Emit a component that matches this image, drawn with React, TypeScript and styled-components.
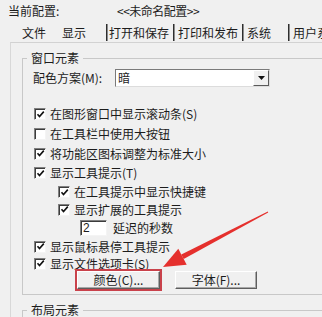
import React from 'react';
import styled, { createGlobalStyle } from 'styled-components';

const Global = createGlobalStyle`
  html, body { margin: 0; padding: 0; background: #f0f0f0; }
  body { font-family: "Noto Sans CJK SC", "Noto Sans", sans-serif; }
`;

const Window = styled.div`
  position: relative;
  width: 322px;
  height: 317px;
  overflow: hidden;
  background: #f0f0f0;
  color: #1c1c1c;
  font-family: "Noto Sans CJK SC", "Noto Sans", sans-serif;
  font-size: 12px;
  line-height: 14px;
`;

const Header = styled.div`
  display: flex;
  align-items: center;
  height: 22px;
  padding-left: 8px;
  white-space: nowrap;
`;

const HeaderLabel = styled.span`
  width: 109px;
  flex-shrink: 0;
`;

const HeaderValue = styled.span`
  letter-spacing: -0.5px;
`;

const TabBar = styled.div`
  display: flex;
  height: 20px;
  padding-left: 18px;
  white-space: nowrap;
`;

const Tab = styled.div<{ $w?: number; $sep?: boolean; $pad: number }>`
  flex-shrink: 0;
  box-sizing: border-box;
  width: ${p => (p.$w ? `${p.$w}px` : 'auto')};
  margin: 2px 0 1px;
  padding-left: ${p => p.$pad}px;
  display: flex;
  align-items: center;
  border-left: ${p => (p.$sep ? '1px solid #2e2e2e' : 'none')};
  box-shadow: ${p => (p.$sep ? 'inset 1px 0 0 #8c8c8c' : 'none')};
`;

const Panel = styled.div`
  margin-left: 10px;
  border-top: 1px solid #d2d2d2;
  border-left: 1px solid #d8d8d8;
  padding: 8px 0 0 11px;
`;

const Group = styled.fieldset<{ $gap?: number }>`
  margin: ${p => p.$gap ?? 0}px 0 0 0;
  padding: 0;
  min-width: 0;
  border: 1px solid #c8c8c8;
  border-right: none;
`;

const GroupTitle = styled.legend`
  padding: 0 4px;
  margin-left: 4px;
  line-height: 14px;
`;

const GroupBody = styled.div`
  display: flex;
  flex-direction: column;
  padding: 3px 0 5px 10px;
`;

const SchemeRow = styled.div`
  display: flex;
  align-items: center;
  height: 20px;
`;

const SchemeLabel = styled.span`
  width: 82px;
  flex-shrink: 0;
`;

const Select = styled.div`
  display: flex;
  align-items: center;
  box-sizing: border-box;
  width: 155px;
  height: 18px;
  background: #fff;
  border: 1px solid;
  border-color: #7a7a7a #dcdcdc #dcdcdc #7a7a7a;
  padding-left: 2px;
`;

const SelectArrow = styled.span`
  margin-left: auto;
  box-sizing: border-box;
  width: 16px;
  height: 16px;
  display: flex;
  align-items: center;
  justify-content: center;
  background: #f0f0f0;
  border: 1px solid;
  border-color: #ffffff #5a5a5a #5a5a5a #ffffff;
`;

const Rows = styled.div`
  display: flex;
  flex-direction: column;
  margin-top: 16px;
`;

const Row = styled.div<{ $h: number; $indent: number }>`
  display: flex;
  align-items: center;
  height: ${p => p.$h}px;
  padding-left: ${p => p.$indent}px;
  white-space: nowrap;
`;

const Check = styled.span`
  flex-shrink: 0;
  box-sizing: border-box;
  width: 12px;
  height: 12px;
  margin-right: 4px;
  background: #fff;
  border: 1px solid;
  border-color: #808080 #f4f4f4 #f4f4f4 #808080;
  box-shadow: inset 1px 1px 0 #3c3c3c;
  display: flex;
  align-items: center;
  justify-content: center;
`;

const Spin = styled.span`
  box-sizing: border-box;
  width: 27px;
  height: 16px;
  margin-right: 6px;
  background: #fff;
  border: 1px solid;
  border-color: #808080 #f4f4f4 #f4f4f4 #808080;
  box-shadow: inset 1px 1px 0 #3c3c3c;
  padding-left: 2px;
  font-family: "Liberation Sans", sans-serif;
  font-size: 12px;
  line-height: 14px;
`;

const ButtonRow = styled.div`
  display: flex;
  gap: 15px;
  padding-left: 44px;
`;

const Button = styled.button<{ $hl?: boolean }>`
  box-sizing: border-box;
  width: ${p => (p.$hl ? 83 : 82)}px;
  height: 18px;
  padding: 0;
  background: #f0f0f0;
  color: inherit;
  font: inherit;
  border: 1px solid;
  border-color: #ffffff #5e5e5e #5e5e5e #ffffff;
  box-shadow: inset -1px -1px 0 #a8a8a8;
  outline: ${p => (p.$hl ? '2px solid #c9424b' : 'none')};
  outline-offset: 0;
`;

const Overlay = styled.svg`
  position: absolute;
  left: 0;
  top: 0;
  pointer-events: none;
`;

const CheckMark = () => (
  <svg width="9" height="9" viewBox="0 0 9 9">
    <path d="M1.5 4.2 L3.5 6.5 L7.8 1.6" fill="none" stroke="#111" strokeWidth="1.6" />
  </svg>
);

type Item = { label: string; checked?: boolean; indent: number; h: number; spin?: string };

const items: Item[] = [
  { label: '在图形窗口中显示滚动条(S)', checked: true, indent: 1, h: 20 },
  { label: '在工具栏中使用大按钮', checked: false, indent: 1, h: 20 },
  { label: '将功能区图标调整为标准大小', checked: true, indent: 1, h: 19 },
  { label: '显示工具提示(T)', checked: true, indent: 1, h: 20 },
  { label: '在工具提示中显示快捷键', checked: true, indent: 25, h: 18 },
  { label: '显示扩展的工具提示', checked: true, indent: 25, h: 17 },
  { label: '延迟的秒数', indent: 47, h: 19, spin: '2' },
  { label: '显示鼠标悬停工具提示', checked: true, indent: 1, h: 19 },
  { label: '显示文件选项卡(S)', checked: true, indent: 1, h: 15 },
];

export default function App() {
  return (
    <>
      <Global />
      <Window>
        <Header>
          <HeaderLabel>当前配置:</HeaderLabel>
          <HeaderValue>&lt;&lt;未命名配置&gt;&gt;</HeaderValue>
        </Header>
        <TabBar>
          <Tab $w={40} $pad={4}>文件</Tab>
          <Tab $w={48} $pad={4}>显示</Tab>
          <Tab $w={67} $pad={2} $sep>打开和保存</Tab>
          <Tab $w={69} $pad={4} $sep>打印和发布</Tab>
          <Tab $w={46} $pad={4} $sep>系统</Tab>
          <Tab $pad={4} $sep>用户系统配置</Tab>
        </TabBar>
        <Panel>
          <Group>
            <GroupTitle>窗口元素</GroupTitle>
            <GroupBody>
              <SchemeRow>
                <SchemeLabel>配色方案(M):</SchemeLabel>
                <Select>
                  暗
                  <SelectArrow>
                    <svg width="7" height="4" viewBox="0 0 7 4">
                      <path d="M0 0 H7 L3.5 4 Z" fill="#111" />
                    </svg>
                  </SelectArrow>
                </Select>
              </SchemeRow>
              <Rows>
                {items.map(it => (
                  <Row key={it.label} $h={it.h} $indent={it.indent}>
                    {it.spin ? (
                      <Spin>{it.spin}</Spin>
                    ) : (
                      <Check>{it.checked && <CheckMark />}</Check>
                    )}
                    {it.label}
                  </Row>
                ))}
              </Rows>
              <ButtonRow>
                <Button $hl>颜色(C)...</Button>
                <Button>字体(F)...</Button>
              </ButtonRow>
            </GroupBody>
          </Group>
          <Group $gap={8}>
            <GroupTitle>布局元素</GroupTitle>
            <GroupBody />
          </Group>
        </Panel>
        <Overlay width="322" height="317" viewBox="0 0 322 317">
          <polygon points="267.8,211.6 268.2,212.4 183.7,259.0 181.3,254.6" fill="#e5302d" />
          <polygon points="163,267 178.3,248.8 186.7,264.8" fill="#e5302d" />
        </Overlay>
      </Window>
    </>
  );
}
